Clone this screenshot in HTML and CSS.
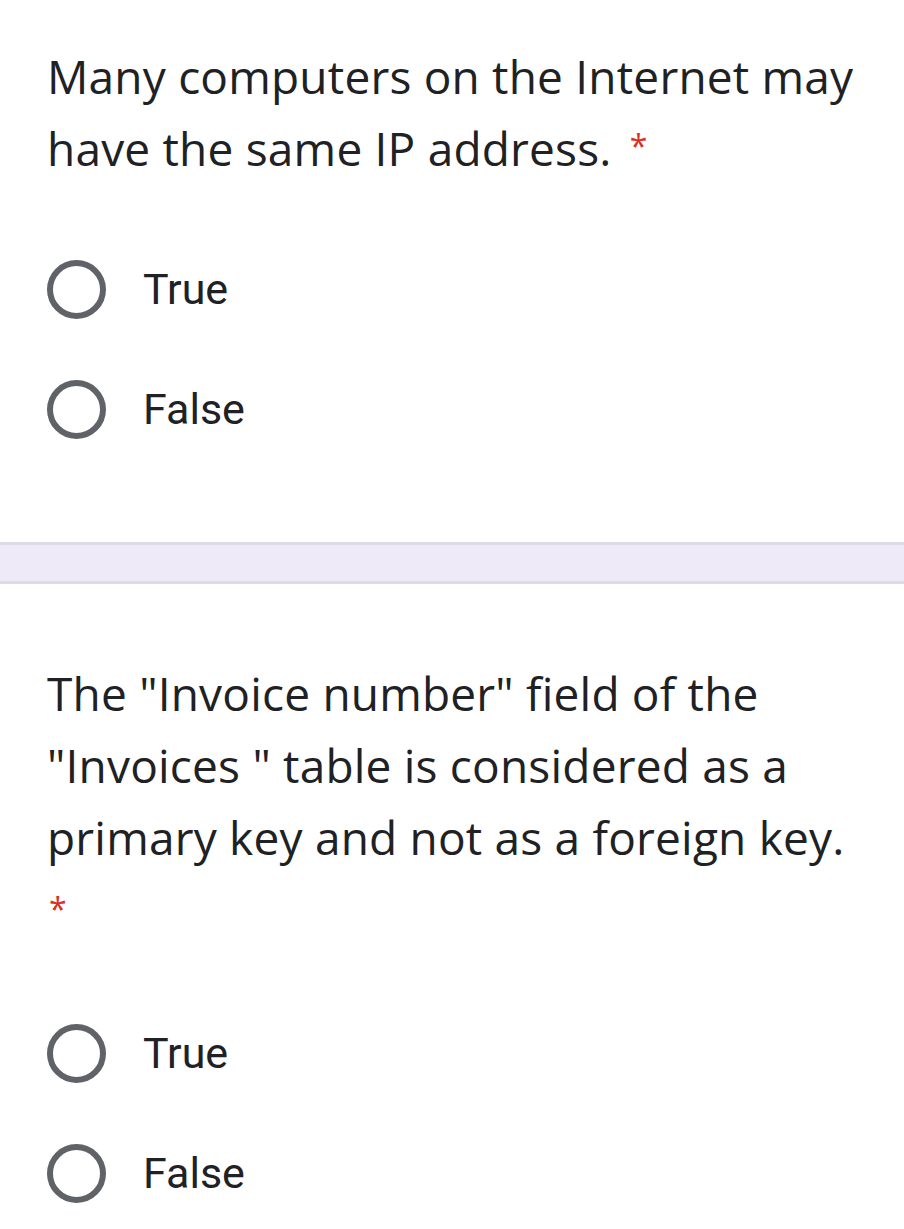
FILE: index.html
```html
<!DOCTYPE html>
<html>
<head>
<meta charset="utf-8">
<link rel="stylesheet" href="styles.css">
</head>
<body>
<section class="question q1">
  <div class="title"><span class="text">Many computers on the Internet may have the same IP address.</span><span class="req">*</span></div>
  <div class="options">
    <div class="option"><span class="radio"></span><span class="label">True</span></div>
    <div class="option"><span class="radio"></span><span class="label">False</span></div>
  </div>
</section>
<div class="divider"></div>
<section class="question q2">
  <div class="title"><span class="text">The "Invoice number" field of the "Invoices " table is considered as a primary key and not as a foreign key.</span></div>
  <div class="req-line"><span class="req first">*</span></div>
  <div class="options">
    <div class="option"><span class="radio"></span><span class="label">True</span></div>
    <div class="option"><span class="radio"></span><span class="label">False</span></div>
  </div>
</section>
</body>
</html>
```
FILE: styles.css
```css
html, body {
  margin: 0;
  padding: 0;
  background: #ffffff;
}
body {
  width: 904px;
  font-family: Roboto, "Noto Sans", sans-serif;
  color: #202124;
}
.question {
  padding: 0 40px 0 47px;
}
.q1 {
  padding-top: 40px;
  padding-bottom: 103px;
}
.q2 {
  padding-top: 73px;
}
.title {
  font-family: "Open Sans", Roboto, sans-serif;
  font-size: 46px;
  line-height: 72px;
  letter-spacing: 0.2px;
  color: #202124;
}
.req {
  display: inline-block;
  color: #d93025;
  font-family: "Open Sans", Roboto, sans-serif;
  font-size: 32px;
  line-height: 32px;
  margin-left: 18px;
  vertical-align: 8px;
}
.req-line {
  height: 72px;
  display: flex;
  align-items: center;
}
.req.first {
  margin-left: 2px;
  vertical-align: 0;
}
.options {
  display: flex;
  flex-direction: column;
  gap: 60px;
  margin-top: 78px;
}
.q1 .options {
  margin-top: 75px;
}
.option {
  display: flex;
  align-items: center;
  height: 60px;
}
.radio {
  box-sizing: border-box;
  width: 59px;
  height: 59px;
  border: 6px solid #5f6368;
  border-radius: 50%;
  flex: none;
}
.label {
  margin-left: 37px;
  font-size: 43px;
  color: #202124;
}
.divider {
  height: 36px;
  background: #eeeaf8;
  border-top: 3px solid #dcdae2;
  border-bottom: 3px solid #dcdae2;
}
```
